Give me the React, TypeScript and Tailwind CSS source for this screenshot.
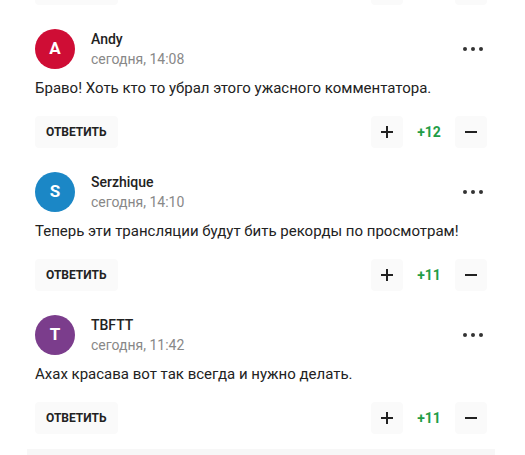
type Comment = {
  author: string;
  initial: string;
  color: string;
  date: string;
  text: string;
  rating: string;
};

const comments: Comment[] = [
  {
    author: "Andy",
    initial: "A",
    color: "bg-[#cf0d35]",
    date: "сегодня, 14:08",
    text: "Браво! Хоть кто то убрал этого ужасного комментатора.",
    rating: "+12",
  },
  {
    author: "Serzhique",
    initial: "S",
    color: "bg-[#1b87c6]",
    date: "сегодня, 14:10",
    text: "Теперь эти трансляции будут бить рекорды по просмотрам!",
    rating: "+11",
  },
  {
    author: "TBFTT",
    initial: "T",
    color: "bg-[#7b3d8c]",
    date: "сегодня, 11:42",
    text: "Ахах красава вот так всегда и нужно делать.",
    rating: "+11",
  },
];

function Actions({ rating }: { rating: string }) {
  return (
    <div className="flex h-8 items-center justify-between">
      <button className="h-8 rounded-[4px] bg-[#fafafa] px-[11px] text-[12px] font-bold uppercase text-[#222]">
        Ответить
      </button>
      <div className="flex items-center">
        <button className="flex h-8 w-8 items-center justify-center rounded-[4px] bg-[#fafafa]">
          <svg width="14" height="14" viewBox="0 0 14 14">
            <path d="M7 1v12M1 7h12" stroke="#222" strokeWidth="2" />
          </svg>
        </button>
        <span className="w-[52px] text-center text-[14px] font-bold text-[#1f9d47]">
          {rating}
        </span>
        <button className="flex h-8 w-8 items-center justify-center rounded-[4px] bg-[#fafafa]">
          <svg width="14" height="14" viewBox="0 0 14 14">
            <path d="M1 7h12" stroke="#222" strokeWidth="2" />
          </svg>
        </button>
      </div>
    </div>
  );
}

// bottom edge of the previous comment's buttons, cut by the top of the page
function CutActions() {
  return (
    <div className="-mt-[27px] flex h-8 justify-between">
      <div className="h-8 w-[83px] rounded-[4px] bg-[#fafafa]" />
      <div className="flex">
        <div className="h-8 w-8 rounded-[4px] bg-[#fafafa]" />
        <div className="w-[52px]" />
        <div className="h-8 w-8 rounded-[4px] bg-[#fafafa]" />
      </div>
    </div>
  );
}

function CommentItem({ comment }: { comment: Comment }) {
  return (
    <div className="pt-6">
      <div className="flex h-10 items-center">
        <div
          className={`flex h-10 w-10 items-center justify-center rounded-full text-[17px] font-bold text-white ${comment.color}`}
        >
          {comment.initial}
        </div>
        <div className="ml-4 flex flex-col">
          <span className="text-[14px] font-medium leading-[18px] text-[#222]">
            {comment.author}
          </span>
          <span className="mt-[2px] text-[14px] leading-[18px] text-[#888]">
            {comment.date}
          </span>
        </div>
        <button className="ml-auto flex h-6 w-7 items-center justify-center gap-[4px]">
          <span className="h-[4px] w-[4px] rounded-full bg-[#333]" />
          <span className="h-[4px] w-[4px] rounded-full bg-[#333]" />
          <span className="h-[4px] w-[4px] rounded-full bg-[#333]" />
        </button>
      </div>
      <p className="mt-[9px] text-[15px] leading-5 text-[#222]">{comment.text}</p>
      <div className="mt-[18px]">
        <Actions rating={comment.rating} />
      </div>
    </div>
  );
}

export default function App() {
  return (
    <div className="h-[455px] w-[525px] overflow-hidden bg-white font-['Roboto',sans-serif]">
      <div className="pl-[35px] pr-[38px]">
        <CutActions />
        {comments.map((c) => (
          <CommentItem key={c.author} comment={c} />
        ))}
        <div className="-ml-[8px] mt-[15px] h-[10px] w-[468px] bg-[#f7f7f7]" />
      </div>
    </div>
  );
}
